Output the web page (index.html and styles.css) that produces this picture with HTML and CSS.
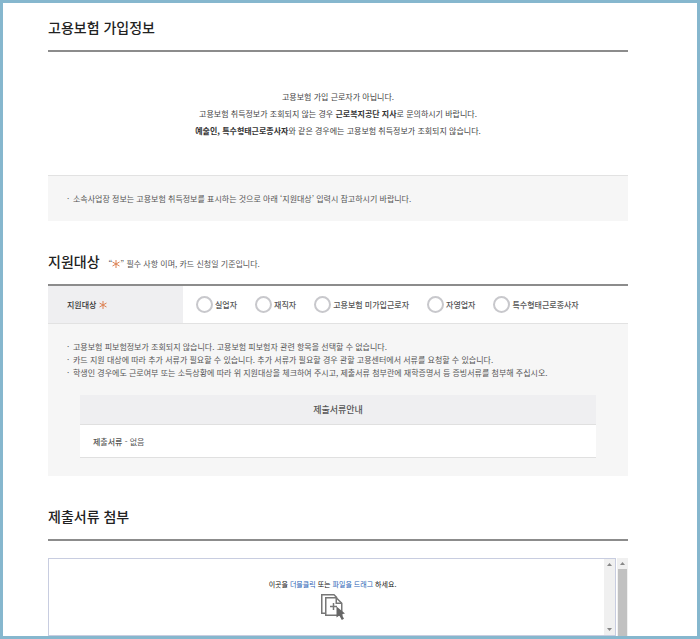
FILE: index.html
```html
<!DOCTYPE html>
<html lang="ko">
<head>
<meta charset="utf-8">
<meta name="viewport" content="width=device-width, initial-scale=1">
<title>고용보험 가입정보</title>
<link rel="stylesheet" href="styles.css">
</head>
<body>
<main class="page">
  <section class="section">
    <header class="section-head"><h2>고용보험 가입정보</h2></header>
    <div class="message">
      <p>고용보험 가입 근로자가 아닙니다.</p>
      <p>고용보험 취득정보가 조회되지 않는 경우 <strong>근로복지공단 지사</strong>로 문의하시기 바랍니다.</p>
      <p><strong>예술인, 특수형태근로종사자</strong>와 같은 경우에는 고용보험 취득정보가 조회되지 않습니다.</p>
    </div>
    <div class="notice">
      <ul class="notes">
        <li>소속사업장 정보는 고용보험 취득정보를 표시하는 것으로 아래 ‘지원대상’ 입력시 참고하시기 바랍니다.</li>
      </ul>
    </div>
  </section>

  <section class="section">
    <header class="section-head">
      <h2>지원대상</h2>
      <p class="hint">“<svg class="star" viewBox="0 0 8 8" aria-hidden="true"><path d="M4 0v8M0.500 2l7 4M7.500 2l-7 4"/></svg>” 필수 사항 이며, 카드 신청일 기준입니다.</p>
    </header>
    <fieldset class="target" aria-labelledby="target-label">
      <div class="target-label" id="target-label">지원대상 <svg class="star" viewBox="0 0 8 8" aria-hidden="true"><path d="M4 0v8M0.500 2l7 4M7.500 2l-7 4"/></svg></div>
      <div class="options">
        <label><input type="radio" name="target">실업자</label>
        <label><input type="radio" name="target">재직자</label>
        <label><input type="radio" name="target">고용보험 미가입근로자</label>
        <label><input type="radio" name="target">자영업자</label>
        <label><input type="radio" name="target">특수형태근로종사자</label>
      </div>
    </fieldset>
    <div class="notice notice-docs">
      <ul class="notes">
        <li>고용보험 피보험정보가 조회되지 않습니다. 고용보험 피보험자 관련 항목을 선택할 수 없습니다.</li>
        <li>카드 지원 대상에 따라 추가 서류가 필요할 수 있습니다. 추가 서류가 필요할 경우 관할 고용센터에서 서류를 요청할 수 있습니다.</li>
        <li>학생인 경우에도 근로여부 또는 소득상황에 따라 위 지원대상을 체크하여 주시고, 제출서류 첨부란에 재학증명서 등 증빙서류를 첨부해 주십시오.</li>
      </ul>
      <table class="docs">
        <thead><tr><th scope="col">제출서류안내</th></tr></thead>
        <tbody><tr><td><strong>제출서류</strong> - 없음</td></tr></tbody>
      </table>
    </div>
  </section>

  <section class="section">
    <header class="section-head"><h2>제출서류 첨부</h2></header>
    <div class="upload">
      <div class="dropbox">
        <div class="drop">
          <p>이곳을 <em>더블클릭</em> 또는 <em>파일을 드래그</em> 하세요.</p>
          <svg class="files" viewBox="0 0 24 26" aria-hidden="true">
            <path class="sheet" d="M5 19.250H.75V.75H13l3 3"/>
            <path class="sheet" d="M4.750 3.750h10.500l5.500 5.500v12H4.750z"/>
            <path class="sheet" d="M15.250 3.750v5.500h5.500M12.500 9v7M9 12.500h7"/>
            <path class="pointer" d="M15.500 12.500v11l2.800-2 2.500 4.500 2.200-1.200-2.400-4.500 3.400-.8z"/>
          </svg>
        </div>
        <div class="bar" aria-hidden="true">
          <svg viewBox="0 0 5 3"><path d="M0 3L2.500 0 5 3z"/></svg>
          <svg viewBox="0 0 5 3"><path d="M0 0h5L2.500 3z"/></svg>
        </div>
      </div>
      <div class="bar bar-outer" aria-hidden="true">
        <svg viewBox="0 0 5 3"><path d="M0 3L2.500 0 5 3z"/></svg>
        <div class="thumb"></div>
      </div>
    </div>
  </section>
</main>
</body>
</html>
```
FILE: styles.css
```css
* { box-sizing: border-box; }

body {
  margin: 0;
  background: #fff;
  color: #555;
  font-family: "Noto Sans CJK KR", "Noto Sans", sans-serif;
  font-size: 8px;
  line-height: 13px;
}

h2, p, ul { margin: 0; padding: 0; font-weight: 400; }

.page {
  min-height: 100vh;
  padding: 14px 69px 0 45px;
  border: 3px solid #86b7ce;
}

.section { margin-bottom: 30px; }
.section:last-child { margin-bottom: 0; }

.section-head {
  display: flex;
  align-items: baseline;
  gap: 9px;
  padding-bottom: 13px;
  border-bottom: 2px solid #8c8c8c;
}

h2 {
  color: #222;
  font-size: 14px;
  font-weight: 500;
  line-height: 20px;
}

.star {
  width: 8px;
  height: 8px;
  vertical-align: -1px;
  fill: none;
  stroke: #dc8052;
}

.message {
  padding: 36px 0;
  color: #444;
  line-height: 17px;
  text-align: center;
}
.message strong { color: #333; }

.notice {
  padding: 16px 19px;
  border-top: 1px solid #e2e2e2;
  background: #f6f6f6;
}

.notes { list-style: none; }
.notes li { position: relative; padding-left: 6px; }
.notes li::before { content: "·"; position: absolute; left: 0; }

.target {
  display: flex;
  min-width: 0;
  margin: 0;
  padding: 0;
  border: 0;
}
.target-label {
  flex: 0 0 135px;
  padding: 12px 19px;
  background: #efeff1;
  color: #333;
  font-weight: 500;
}
.options {
  display: flex;
  flex: 1;
  flex-wrap: wrap;
  align-items: center;
  gap: 8px 18px;
  padding: 0 13px;
}
.options label { display: flex; align-items: center; gap: 2px; font-weight: 500; }
.options input {
  appearance: none;
  width: 17px;
  height: 17px;
  margin: 0;
  border: 2px solid #c8c8cc;
  border-radius: 50%;
  background: #fff;
}
.options input:checked { border-width: 5px; }

.notice-docs { padding-bottom: 18px; }
.docs {
  width: calc(100% - 26px);
  margin: 16px 13px 0;
  border-collapse: collapse;
}
.docs th, .docs td {
  border-bottom: 1px solid #e0e0e0;
  padding: 8px 13px;
}
.docs th { background: #efeff1; font-size: 9px; font-weight: 500; }
.docs td { padding: 10px 13px 9px; background: #fff; }
.docs td strong { font-weight: 500; }

.upload { display: flex; gap: 1px; margin-top: 17px; }
.dropbox {
  display: flex;
  flex: 1;
  border: 1px solid #c8cde0;
}
.drop {
  flex: 1;
  padding: 19px 0 15px 12px;
  color: #111;
  font-size: 7px;
  font-weight: 500;
  text-align: center;
}
.drop em { color: #1f5fb5; font-style: normal; }
.files { display: block; width: 24px; height: 26px; margin: 3px auto 0; }
.sheet { fill: none; stroke: #777; stroke-width: 1.5; }
.pointer { fill: #666; }

.bar {
  display: flex;
  flex-direction: column;
  align-items: center;
  justify-content: space-between;
  width: 11px;
  padding: 4px 0;
  background: #f0f0f0;
}
.bar svg { width: 5px; height: 3px; fill: #888; }
.bar-outer { gap: 4px; padding-bottom: 0; }
.thumb { flex: 1; width: 9px; background: #c1c1c1; }
```
